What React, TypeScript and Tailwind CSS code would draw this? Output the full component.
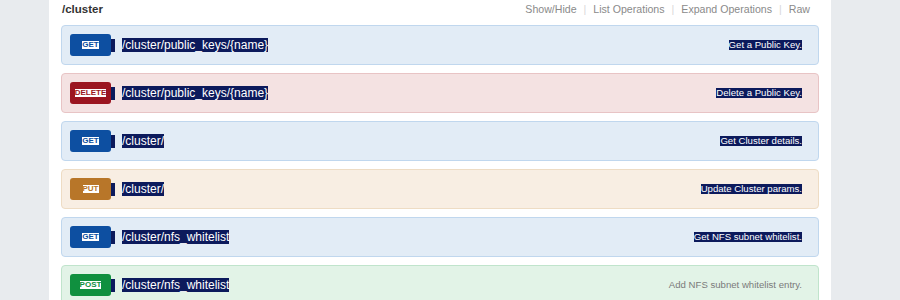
const ops = [
  {
    method: "GET",
    path: "/cluster/public_keys/{name}",
    desc: "Get a Public Key.",
    row: "bg-[#e2ecf6] border-[#c0d7ee]",
    badge: "bg-[#0d4fa1]",
    label: "text-[#0d4fa1]",
    selected: true,
  },
  {
    method: "DELETE",
    path: "/cluster/public_keys/{name}",
    desc: "Delete a Public Key.",
    row: "bg-[#f4e2e2] border-[#e8c4c5]",
    badge: "bg-[#9b1520]",
    label: "text-[#9b1520]",
    selected: true,
  },
  {
    method: "GET",
    path: "/cluster/",
    desc: "Get Cluster details.",
    row: "bg-[#e2ecf6] border-[#c0d7ee]",
    badge: "bg-[#0d4fa1]",
    label: "text-[#0d4fa1]",
    selected: true,
  },
  {
    method: "PUT",
    path: "/cluster/",
    desc: "Update Cluster params.",
    row: "bg-[#f8eee3] border-[#eedcc4]",
    badge: "bg-[#b87629]",
    label: "text-[#b87629]",
    selected: true,
  },
  {
    method: "GET",
    path: "/cluster/nfs_whitelist",
    desc: "Get NFS subnet whitelist.",
    row: "bg-[#e2ecf6] border-[#c0d7ee]",
    badge: "bg-[#0d4fa1]",
    label: "text-[#0d4fa1]",
    selected: true,
  },
  {
    method: "POST",
    path: "/cluster/nfs_whitelist",
    desc: "Add NFS subnet whitelist entry.",
    row: "bg-[#e2f3e7] border-[#c0e4cc]",
    badge: "bg-[#10903f]",
    label: "text-[#10903f]",
    selected: false,
  },
];

export default function App() {
  return (
    <div className="h-[300px] w-full overflow-hidden bg-[#e8ebee] pl-[49px] font-['Liberation_Sans',Arial,sans-serif]">
      <div className="h-full w-[782px] bg-white px-[12px]">
        <div className="flex h-[25px] items-start justify-between pt-[2px]">
          <h2 className="pl-[1px] text-[11.5px] font-bold leading-[14px] text-[#333]">/cluster</h2>
          <div className="flex items-center pr-[9px] text-[10.6px] leading-[14px] text-[#8a8a8a]">
            <span>Show/Hide</span>
            <span className="px-[7px] text-[#d8d8d8]">|</span>
            <span>List Operations</span>
            <span className="px-[7px] text-[#d8d8d8]">|</span>
            <span>Expand Operations</span>
            <span className="px-[7px] text-[#d8d8d8]">|</span>
            <span>Raw</span>
          </div>
        </div>

        <div className="flex flex-col gap-[8px]">
          {ops.map((op, i) => (
            <div
              key={i}
              className={`flex h-[40px] items-center justify-between rounded-[4px] border pl-[8px] pr-[16px] ${op.row}`}
            >
              <div className="flex items-center">
                <span
                  className={`flex h-[22px] w-[41px] items-center justify-center rounded-[3px] ${op.badge}`}
                >
                  <span
                    className={`bg-white text-[8px] font-bold leading-[8px] ${op.label}`}
                  >
                    {op.method}
                  </span>
                </span>
                <span className="h-[13px] w-[4px] bg-[#0c1a5c]" />
                <span className="ml-[7px] bg-[#0c1a5c] text-[12px] leading-[14px] text-white">
                  {op.path}
                </span>
              </div>
              <span
                className={`text-[9.6px] leading-[10px] ${
                  op.selected ? "bg-[#0c1a5c] text-white" : "text-[#7a7a7a]"
                }`}
              >
                {op.desc}
              </span>
            </div>
          ))}
        </div>
      </div>
    </div>
  );
}
